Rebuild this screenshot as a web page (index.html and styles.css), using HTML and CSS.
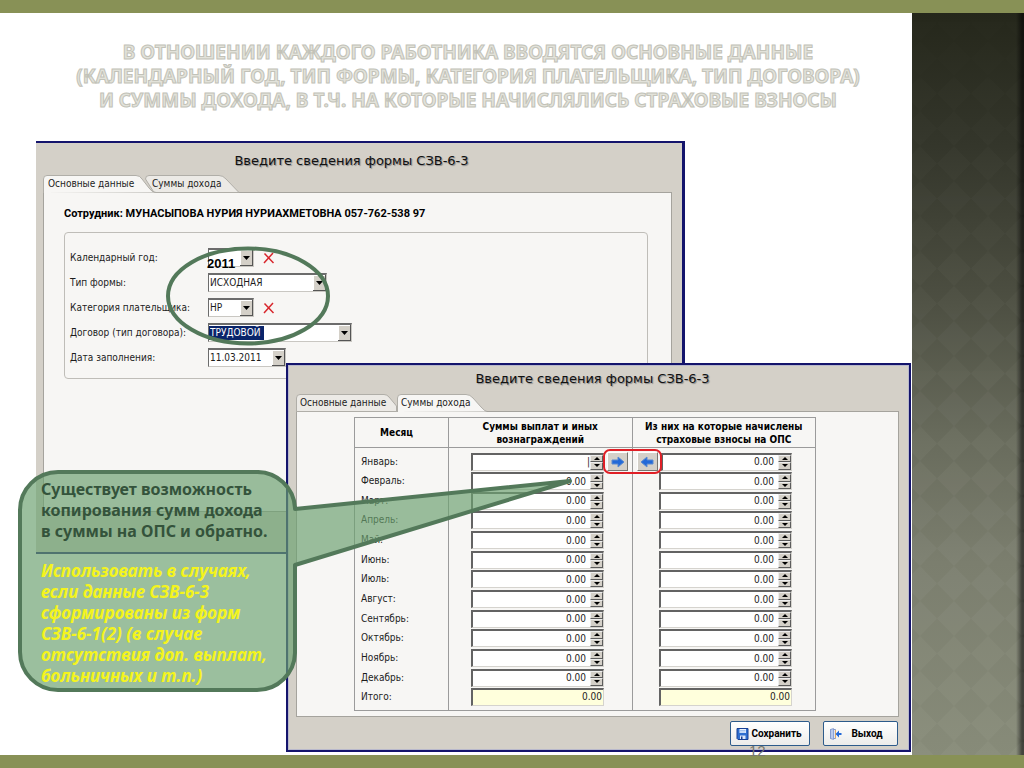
FILE: index.html
```html
<!DOCTYPE html>
<html lang="ru">
<head>
<meta charset="utf-8">
<title>Сведения формы СЗВ-6-3</title>
<link rel="stylesheet" href="styles.css">
</head>
<body>
<div class="bar"></div>
<div class="stage">
<main class="slide">
  <h1 class="headline">В ОТНОШЕНИИ КАЖДОГО РАБОТНИКА ВВОДЯТСЯ ОСНОВНЫЕ ДАННЫЕ<br>(КАЛЕНДАРНЫЙ ГОД, ТИП ФОРМЫ, КАТЕГОРИЯ ПЛАТЕЛЬЩИКА, ТИП ДОГОВОРА)<br>И СУММЫ ДОХОДА, В Т.Ч. НА КОТОРЫЕ НАЧИСЛЯЛИСЬ СТРАХОВЫЕ ВЗНОСЫ</h1>

  <section class="window window-main">
    <h2 class="window-title">Введите сведения формы СЗВ-6-3</h2>
    <div class="tabs">
      <button class="tab tab-active tab-wide" type="button"><svg viewBox="0 0 114 18" preserveAspectRatio="none"><path d="M.5 18V4Q.5.5 4 .5H93Q97 .5 99 4L106 13Q109 17.500 113 17.500" fill="#f7f6f4" stroke="#b0aea8"/></svg><span>Основные данные</span></button>
      <button class="tab" type="button"><svg viewBox="0 0 96 18" preserveAspectRatio="none"><path d="M.5 4Q.5.5 4 .5H74Q78 .5 81 4L94 17.500H9Z" fill="#eceae6" stroke="#b0aea8"/></svg><span>Суммы дохода</span></button>
    </div>
    <div class="panel">
      <p class="employee">Сотрудник: МУНАСЫПОВА НУРИЯ НУРИАХМЕТОВНА 057-762-538 97</p>
      <div class="group">
        <div class="row"><label for="year">Календарный год:</label><select id="year" class="select w-short"><option></option></select><button class="clear" type="button" aria-label="Очистить год"><svg viewBox="0 0 12 12"><path d="M1.500 1.500L10.500 11M10 1L1 11" stroke="#d8262c" stroke-width="1.500" fill="none"/></svg></button></div>
        <div class="row"><label for="type">Тип формы:</label><select id="type" class="select w-type"><option>ИСХОДНАЯ</option></select></div>
        <div class="row"><label for="cat">Категория плательщика:</label><select id="cat" class="select w-short"><option>НР</option></select><button class="clear" type="button" aria-label="Очистить категорию"><svg viewBox="0 0 12 12"><path d="M1.500 1.500L10.500 11M10 1L1 11" stroke="#d8262c" stroke-width="1.500" fill="none"/></svg></button></div>
        <div class="row"><label for="deal">Договор (тип договора):</label><select id="deal" class="select w-deal selected"><option>ТРУДОВОЙ</option></select></div>
        <div class="row"><label for="date">Дата заполнения:</label><select id="date" class="select w-date"><option>11.03.2011</option></select></div>
      </div>
    </div>
  </section>
  <strong class="year-note">2011</strong>
  <svg class="ellipse" viewBox="0 0 164 100"><ellipse cx="82" cy="50" rx="80" ry="47.500" fill="none" stroke="#53795a" stroke-width="4"/></svg>

  <section class="window window-sums">
    <h2 class="window-title">Введите сведения формы СЗВ-6-3</h2>
    <div class="tabs">
      <button class="tab tab-first" type="button"><svg viewBox="0 0 101 18" preserveAspectRatio="none"><path d="M.5 17.500V4Q.5.5 4 .5H88Q91 .5 93 3L100.500 12V17.500Z" fill="#eceae6" stroke="#b0aea8"/></svg><span>Основные данные</span></button>
      <button class="tab tab-active tab-second" type="button"><svg viewBox="0 0 90 18" preserveAspectRatio="none"><path d="M.5 18V4Q.5.5 4 .5H69Q73 .5 76 4L84 13Q88 17.500 90 17.500" fill="#f7f6f4" stroke="#b0aea8"/></svg><span>Суммы дохода</span></button>
    </div>
    <div class="panel">
      <table class="sums">
        <thead><tr><th class="c-month">Месяц</th><th class="c-sum">Суммы выплат и иных<br>вознаграждений</th><th class="c-sum">Из них на которые начислены<br>страховые взносы на ОПС</th></tr></thead>
        <tbody>
          <tr><th scope="row">Январь:</th><td><div class="cell"><span class="field"><input aria-label="Январь, выплаты" class="caret" value="|"><span class="spin"><button type="button"></button><button type="button"></button></span></span><button class="copy" type="button" aria-label="Скопировать вправо"><svg viewBox="0 0 14 12"><path d="M1 4H7V1L13 6L7 11V8H1Z" fill="#2269d8" stroke="#5a8ad0"/></svg></button><i class="ring"></i></div></td><td><div class="cell"><button class="copy" type="button" aria-label="Скопировать влево"><svg viewBox="0 0 14 12"><path d="M13 4H7V1L1 6L7 11V8H13Z" fill="#2269d8" stroke="#5a8ad0"/></svg></button><span class="field"><input aria-label="Январь, ОПС" value="0.00"><span class="spin"><button type="button"></button><button type="button"></button></span></span></div></td></tr>
          <tr><th scope="row">Февраль:</th><td><div class="cell"><span class="field"><input aria-label="Февраль, выплаты" value="0.00"><span class="spin"><button type="button"></button><button type="button"></button></span></span></div></td><td><div class="cell"><span class="field"><input aria-label="Февраль, ОПС" value="0.00"><span class="spin"><button type="button"></button><button type="button"></button></span></span></div></td></tr>
          <tr><th scope="row">Март:</th><td><div class="cell"><span class="field"><input aria-label="Март, выплаты" value="0.00"><span class="spin"><button type="button"></button><button type="button"></button></span></span></div></td><td><div class="cell"><span class="field"><input aria-label="Март, ОПС" value="0.00"><span class="spin"><button type="button"></button><button type="button"></button></span></span></div></td></tr>
          <tr><th scope="row">Апрель:</th><td><div class="cell"><span class="field"><input aria-label="Апрель, выплаты" value="0.00"><span class="spin"><button type="button"></button><button type="button"></button></span></span></div></td><td><div class="cell"><span class="field"><input aria-label="Апрель, ОПС" value="0.00"><span class="spin"><button type="button"></button><button type="button"></button></span></span></div></td></tr>
          <tr><th scope="row">Май:</th><td><div class="cell"><span class="field"><input aria-label="Май, выплаты" value="0.00"><span class="spin"><button type="button"></button><button type="button"></button></span></span></div></td><td><div class="cell"><span class="field"><input aria-label="Май, ОПС" value="0.00"><span class="spin"><button type="button"></button><button type="button"></button></span></span></div></td></tr>
          <tr><th scope="row">Июнь:</th><td><div class="cell"><span class="field"><input aria-label="Июнь, выплаты" value="0.00"><span class="spin"><button type="button"></button><button type="button"></button></span></span></div></td><td><div class="cell"><span class="field"><input aria-label="Июнь, ОПС" value="0.00"><span class="spin"><button type="button"></button><button type="button"></button></span></span></div></td></tr>
          <tr><th scope="row">Июль:</th><td><div class="cell"><span class="field"><input aria-label="Июль, выплаты" value="0.00"><span class="spin"><button type="button"></button><button type="button"></button></span></span></div></td><td><div class="cell"><span class="field"><input aria-label="Июль, ОПС" value="0.00"><span class="spin"><button type="button"></button><button type="button"></button></span></span></div></td></tr>
          <tr><th scope="row">Август:</th><td><div class="cell"><span class="field"><input aria-label="Август, выплаты" value="0.00"><span class="spin"><button type="button"></button><button type="button"></button></span></span></div></td><td><div class="cell"><span class="field"><input aria-label="Август, ОПС" value="0.00"><span class="spin"><button type="button"></button><button type="button"></button></span></span></div></td></tr>
          <tr><th scope="row">Сентябрь:</th><td><div class="cell"><span class="field"><input aria-label="Сентябрь, выплаты" value="0.00"><span class="spin"><button type="button"></button><button type="button"></button></span></span></div></td><td><div class="cell"><span class="field"><input aria-label="Сентябрь, ОПС" value="0.00"><span class="spin"><button type="button"></button><button type="button"></button></span></span></div></td></tr>
          <tr><th scope="row">Октябрь:</th><td><div class="cell"><span class="field"><input aria-label="Октябрь, выплаты" value="0.00"><span class="spin"><button type="button"></button><button type="button"></button></span></span></div></td><td><div class="cell"><span class="field"><input aria-label="Октябрь, ОПС" value="0.00"><span class="spin"><button type="button"></button><button type="button"></button></span></span></div></td></tr>
          <tr><th scope="row">Ноябрь:</th><td><div class="cell"><span class="field"><input aria-label="Ноябрь, выплаты" value="0.00"><span class="spin"><button type="button"></button><button type="button"></button></span></span></div></td><td><div class="cell"><span class="field"><input aria-label="Ноябрь, ОПС" value="0.00"><span class="spin"><button type="button"></button><button type="button"></button></span></span></div></td></tr>
          <tr><th scope="row">Декабрь:</th><td><div class="cell"><span class="field"><input aria-label="Декабрь, выплаты" value="0.00"><span class="spin"><button type="button"></button><button type="button"></button></span></span></div></td><td><div class="cell"><span class="field"><input aria-label="Декабрь, ОПС" value="0.00"><span class="spin"><button type="button"></button><button type="button"></button></span></span></div></td></tr>
          <tr><th scope="row">Итого:</th><td><div class="cell"><span class="field total"><input aria-label="Итого, выплаты" value="0.00" readonly></span></div></td><td><div class="cell"><span class="field total"><input aria-label="Итого, ОПС" value="0.00" readonly></span></div></td></tr>
        </tbody>
      </table>
    </div>
    <div class="actions">
      <button class="action action-save" type="button"><svg viewBox="0 0 12 12"><path d="M.5.5H11.500V11.500H1.500L.5 10.500Z" fill="#2f6fd0" stroke="#173f94"/><path d="M3 1H9.500V5H3Z" fill="#e8f2ff"/><path d="M3.500 2.500H9M3.500 4H9" stroke="#79a4e0" stroke-width=".6"/><path d="M3.500 7.500H9V11H3.500Z" fill="#dfe9f8"/><path d="M4.500 8.500H6V11H4.500Z" fill="#173f94"/></svg><span>Сохранить</span></button>
      <button class="action action-exit" type="button"><svg viewBox="0 0 13 12"><path d="M1.500 1.500H6.500V10.500H1.500Z" fill="#dce6f8" stroke="#8298c8"/><path d="M1.500 1.500L4.500 .5V11.500L1.500 10.500Z" fill="#b9cbee" stroke="#7f96cc" stroke-width=".8"/><path d="M6.500 2V10" stroke="#e0a860"/><path d="M12.500 5H10V2.500L6.500 6L10 9.500V7H12.500Z" fill="#2269d8"/></svg><span>Выход</span></button>
    </div>
  </section>
  <span class="page-number">12</span>

  <aside class="callout">
    <svg class="callout-shape" viewBox="0 0 560 224"><path d="M40 2H238A38 38 0 0 1 277 38V39L552 11L277 95V183A38 38 0 0 1 239 220H40A38 38 0 0 1 2 182V40A38 38 0 0 1 40 2Z" fill="#6ca170" fill-opacity=".68" stroke="#53795a" stroke-width="4" stroke-linejoin="round"/></svg>
    <div class="callout-text">
      <p class="callout-lead">Существует возможность<br>копирования сумм дохода<br>в суммы на ОПС и обратно.</p>
      <p class="callout-note">Использовать в случаях,<br>если данные СЗВ-6-3<br>сформированы из форм<br>СЗВ-6-1(2) (в случае<br>отсутствия доп. выплат,<br>больничных и т.п.)</p>
    </div>
  </aside>
</main>
<div class="side"><svg width="100%" height="100%"><defs><pattern id="diamonds" x="-9" y="-7" width="34" height="35" patternUnits="userSpaceOnUse"><path d="M17 0L34 17.500L17 35L0 17.500Z" fill="#fff" fill-opacity=".035"/></pattern><linearGradient id="fade" x2="0" y2="1"><stop offset="0" stop-color="#fff" stop-opacity=".15"/><stop offset=".6" stop-color="#fff"/></linearGradient><mask id="fade-mask"><rect width="100%" height="100%" fill="url(#fade)"/></mask></defs><rect width="100%" height="100%" fill="url(#diamonds)" mask="url(#fade-mask)"/></svg></div>
</div>
<div class="bar"></div>
</body>
</html>
```
FILE: styles.css
```css
* { box-sizing: border-box; }

body {
  margin: 0;
  min-height: 100vh;
  display: flex;
  flex-direction: column;
  background: #fff;
  font: 10px/14px "DejaVu Sans Condensed", "DejaVu Sans", sans-serif;
  color: #1c1c1c;
}

button, input, select { font: inherit; color: inherit; margin: 0; padding: 0; }
h1, h2, p { margin: 0; }

.bar { height: 13px; flex: none; background: #889156; }
.stage { flex: 1; display: flex; }
.slide { position: relative; flex: 1; min-width: 0; }

.side {
  width: 112px;
  flex: none;
  background:
    linear-gradient(90deg, transparent 104px, rgba(0, 0, 0, .55) 110px),
    linear-gradient(#25271b, #34362b 18%, #4d4f42 39%, #686b5c 57%, #7b7e6e 74%, #878b79);
}
.side svg { display: block; }

.headline {
  padding: 27px 0 0 24px;
  text-align: center;
  font: bold 19px/24px "Noto Sans", sans-serif;
  color: #e2e2da;
  -webkit-text-stroke: 1px #c2c2b8;
}

/* Dialog windows */
.window {
  position: absolute;
  display: flex;
  flex-direction: column;
  background: #d4d0c8;
  border: 2px solid #14146c;
}
.window-main { left: 36px; top: 128px; width: 649px; height: 413px; border-left: 0; border-right-width: 3px; padding: 9px 10px 40px 7px; }
.window-sums { left: 286px; top: 350px; width: 625px; padding: 5px 10px 4px 8px; outline: 1px solid #b8b8cc; outline-offset: -3px; }

.window-title {
  font: 13px/18px "DejaVu Sans", sans-serif;
  text-align: center;
  color: #111;
  text-shadow: 1px 1px 1px #888;
}
.window-sums .window-title { padding-right: 10px; padding-bottom: 6px; }
.window-main .window-title { padding-right: 12px; padding-bottom: 5px; }

.tabs { display: flex; height: 18px; margin-bottom: -1px; position: relative; z-index: 1; }
.tab { position: relative; width: 96px; height: 18px; margin-left: -12px; padding-left: 7px; border: 0; background: none; text-align: left; }
.tab svg { position: absolute; left: 0; top: 0; width: 100%; height: 100%; }
.tab span { position: relative; }
.tab-active { z-index: 1; }
.tab-wide { width: 114px; margin-left: 0; padding-left: 5px; }
.tab-first { width: 101px; margin-left: 0; padding-left: 4px; }
.tab-second { width: 90px; margin-left: 0; padding-left: 4px; }

.panel { flex: 1; background: #f7f6f4; border: 1px solid #a5a39d; }
.window-main .panel { padding: 13px 23px 0 20px; }
.window-sums .panel { padding: 5px 82px 5px 57px; }

.employee { font: bold 11px/16px Roboto, sans-serif; color: #000; }
.group { margin-top: 10px; padding: 12px 5px 8px; border: 1px solid #bfbdb8; border-radius: 4px; }
.row { display: flex; align-items: center; height: 25px; }
.row label { width: 138px; white-space: nowrap; }

.select {
  appearance: none;
  height: 19px;
  padding-left: 1px;
  border: 1px solid #c9c7c2;
  border-top: 2px solid #6c6c6c;
  border-left: 1px solid #6c6c6c;
  border-radius: 0;
  background: #fff url("data:image/svg+xml,%3Csvg xmlns='http://www.w3.org/2000/svg' width='13' height='16'%3E%3Cpath d='M0 0H13V16H0Z' fill='%23555'/%3E%3Cpath d='M0 0H12V15H0Z' fill='%23fff'/%3E%3Cpath d='M1 1H12V15H1Z' fill='%23d4d0c8'/%3E%3Cpath d='M3 6H10L6.500 10Z'/%3E%3C/svg%3E") no-repeat right center;
}
.w-short { width: 46px; }
.w-type { width: 119px; }
.w-deal { width: 144px; }
.w-date { width: 78px; }
.selected {
  color: #fff;
  background-image: url("data:image/svg+xml,%3Csvg xmlns='http://www.w3.org/2000/svg' width='13' height='16'%3E%3Cpath d='M0 0H13V16H0Z' fill='%23555'/%3E%3Cpath d='M0 0H12V15H0Z' fill='%23fff'/%3E%3Cpath d='M1 1H12V15H1Z' fill='%23d4d0c8'/%3E%3Cpath d='M3 6H10L6.500 10Z'/%3E%3C/svg%3E"), linear-gradient(#0a246a, #0a246a);
  background-size: auto, 55px 14px;
  background-position: right center, left center;
}
.clear { width: 12px; height: 12px; margin-left: 9px; border: 0; background: none; }
.clear svg { display: block; }

.year-note { position: absolute; left: 207px; top: 243px; font: bold 13px/15px "Liberation Sans", sans-serif; color: #000; }
.ellipse { position: absolute; left: 166px; top: 233px; width: 164px; height: 100px; }

/* Income table */
.sums { width: 100%; border-collapse: collapse; table-layout: fixed; border: 1px solid #9b9b9b; }
.sums th, .sums td { padding: 0; border-left: 1px solid #9b9b9b; }
.sums thead th { height: 30px; border-bottom: 1px solid #9b9b9b; font: bold 10px/13px "DejaVu Sans Condensed", sans-serif; color: #000; white-space: nowrap; }
.sums thead .c-month { width: 94px; padding-right: 10px; }
.sums tbody th { font-weight: normal; text-align: left; padding-left: 6px; }
.sums tbody tr { height: 20px; }
.sums tbody tr:nth-child(3n) { height: 19px; }
.sums tbody tr:first-child > * { padding-top: 4px; }
.sums tbody tr:last-child > * { padding-bottom: 4px; }
.cell { position: relative; display: flex; align-items: center; height: 19px; padding-left: 22px; gap: 3px; }
.sums td:last-child .cell { padding-left: 4px; padding-right: 23px; justify-content: flex-end; }

.field { display: flex; width: 133px; height: 18px; background: #fff; border: 1px solid #d5d3ce; border-top: 2px solid #636363; border-left: 2px solid #636363; }
.field input { flex: 1; width: 0; min-width: 0; border: 0; padding-right: 4px; background: none; text-align: right; outline: 0; }
.field .caret { padding-right: 0; }
.field.total { background: #ffffdc; }
.field.total input { padding-right: 1px; }
.spin { width: 13px; flex: none; display: flex; flex-direction: column; }
.spin button { flex: 1; min-height: 0; display: flex; align-items: center; justify-content: center; border: 1px solid #5c5c5c; border-top-color: #eee; border-left-color: #eee; background: #d4d0c8; }
.spin button::after { content: ""; border: 3px solid transparent; border-top: 0; border-bottom: 3px solid #000; }
.spin button:last-child::after { border-top: 3px solid #000; border-bottom: 0; }
.copy { display: flex; align-items: center; justify-content: center; width: 21px; height: 19px; flex: none; border: 1px solid #77756f; border-top-color: #fff; border-left-color: #fff; background: #d4d0c8; }
.copy svg { width: 14px; height: 12px; flex: none; }
.ring { position: absolute; z-index: 2; left: 154px; top: -3px; width: 59px; height: 25px; border: 2px solid #e01f26; border-radius: 7px; }

.actions { display: flex; justify-content: flex-end; gap: 13px; padding: 4px 1px 0 0; }
.action { display: flex; align-items: center; height: 25px; padding: 0 5px; border: 1px solid #2d5b8b; border-radius: 2px; background: linear-gradient(#fff, #ececea); font: bold 10px/14px Roboto, sans-serif; color: #000; }
.action svg { width: 13px; height: 12px; flex: none; }
.action span { flex: 1; text-align: center; }
.action-save { width: 80px; }
.action-exit { width: 75px; }

.page-number { position: absolute; z-index: 1; left: 749px; bottom: -4px; font: 15px/16px "Liberation Sans", sans-serif; color: #77776f; }

/* Callout */
.callout { position: absolute; left: 18px; top: 457px; width: 560px; }
.callout-shape { position: absolute; left: 0; top: 0; width: 560px; height: 224px; }
.callout-text { position: relative; width: 260px; margin-left: 23px; padding-top: 9px; font-family: "Noto Sans", sans-serif; font-weight: bold; white-space: nowrap; }
.callout-lead { font-size: 16px; line-height: 21px; color: #34533b; }
.callout-note { margin-top: 18px; font-size: 17px; line-height: 21px; font-style: italic; color: #f4f41c; }
```
